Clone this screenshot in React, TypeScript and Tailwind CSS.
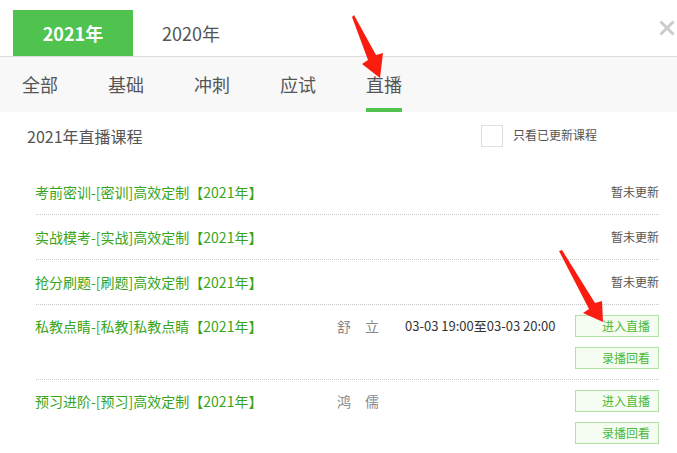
import { useState } from "react";

interface Course {
  title: string;
  teacher?: string;
  time?: string;
  live: boolean;
}

const courses: Course[] = [
  { title: "考前密训-[密训]高效定制【2021年】", live: false },
  { title: "实战模考-[实战]高效定制【2021年】", live: false },
  { title: "抢分刷题-[刷题]高效定制【2021年】", live: false },
  { title: "私教点睛-[私教]私教点睛【2021年】", teacher: "舒　立", time: "03-03 19:00至03-03 20:00", live: true },
  { title: "预习进阶-[预习]高效定制【2021年】", teacher: "鸿　儒", live: true },
];

const navs = ["全部", "基础", "冲刺", "应试", "直播"];

function Btn({ label }: { label: string }) {
  return (
    <button className="w-[84px] h-[22px] border border-[#aee3a4] bg-[#f5fdf3] text-[12px] leading-[20px] text-[#4bb93a] text-right pr-[8px]">
      {label}
    </button>
  );
}

function Arrow({ points }: { points: string }) {
  return <polygon points={points} fill="#fb1c10" />;
}

export default function App() {
  const [year, setYear] = useState(2021);
  const [nav, setNav] = useState(4);
  const [onlyUpdated, setOnlyUpdated] = useState(false);

  return (
    <div className="relative w-[677px] h-[453px] overflow-hidden bg-white font-['Noto_Sans_CJK_SC','Noto_Sans',sans-serif]">
      {/* year tabs */}
      <div className="flex items-end h-[57px] pl-[13px] border-b border-[#dddddd]">
        <button
          onClick={() => setYear(2021)}
          className={`w-[120px] h-[46px] text-[18px] leading-[46px] ${year === 2021 ? "bg-[#50c34f] text-white font-bold" : "text-[#555]"}`}
        >
          2021年
        </button>
        <button
          onClick={() => setYear(2020)}
          className={`ml-[29px] h-[46px] text-[18px] leading-[46px] ${year === 2020 ? "bg-[#50c34f] text-white font-bold px-[30px]" : "text-[#555]"}`}
        >
          2020年
        </button>
        <button className="ml-auto self-start mt-[20px] mr-[2px] w-[16px] h-[16px]">
          <svg width="16" height="16" viewBox="0 0 16 16">
            <path d="M1.5 1.5L14.5 14.5M14.5 1.5L1.5 14.5" stroke="#cccccc" strokeWidth="3" />
          </svg>
        </button>
      </div>

      {/* category nav */}
      <div className="flex gap-[50px] h-[55px] pl-[22px] bg-[#f8f8f8]">
        {navs.map((n, i) => (
          <button
            key={n}
            onClick={() => setNav(i)}
            className={`h-full text-[18px] leading-[55px] text-[#555] ${nav === i ? "shadow-[inset_0_-4px_0_#50c34f]" : ""}`}
          >
            {n}
          </button>
        ))}
      </div>

      {/* section title */}
      <div className="flex items-center mt-[13px] h-[22px] pl-[27px]">
        <div className="w-[454px] text-[16px] leading-[22px] text-[#555]">2021年直播课程</div>
        <label className="flex items-center gap-[10px] cursor-pointer">
          <span
            onClick={() => setOnlyUpdated(!onlyUpdated)}
            className="w-[22px] h-[22px] border border-[#dddddd] bg-white flex items-center justify-center text-[14px] text-[#50c34f]"
          >
            {onlyUpdated ? "✓" : ""}
          </span>
          <span className="text-[12px] leading-[20px] text-[#555] -mt-[2px]">只看已更新课程</span>
        </label>
      </div>

      {/* course list */}
      <div className="mt-[23px] pl-[36px] pr-[18px]">
        {courses.map((c) =>
          c.live ? (
            <div key={c.title} className="flex items-start py-[10px] border-b border-dotted border-[#c8c8c8]">
              <div className="w-[302px] -ml-[1px] text-[14px] leading-[22px] text-[#38a520]">{c.title}</div>
              <div className="w-[68px] text-[14px] leading-[22px] text-[#888]">{c.teacher}</div>
              <div className="text-[13px] leading-[22px] text-[#333]">{c.time}</div>
              <div className="ml-auto flex flex-col gap-[10px]">
                <Btn label="进入直播" />
                <Btn label="录播回看" />
              </div>
            </div>
          ) : (
            <div key={c.title} className="flex items-center justify-between h-[45px] border-b border-dotted border-[#c8c8c8]">
              <div className="-ml-[1px] text-[14px] leading-[22px] text-[#38a520]">{c.title}</div>
              <div className="text-[12px] leading-[22px] text-[#555]">暂未更新</div>
            </div>
          )
        )}
      </div>

      {/* red annotation arrows */}
      <svg className="absolute inset-0 pointer-events-none" width="677" height="453">
        <Arrow points="352,17 354,15 376,55 383,53 380,78 362,64 368,60" />
        <Arrow points="559,251 562,250 595,303 602,301 603,322 583,313 589,309" />
      </svg>
    </div>
  );
}
